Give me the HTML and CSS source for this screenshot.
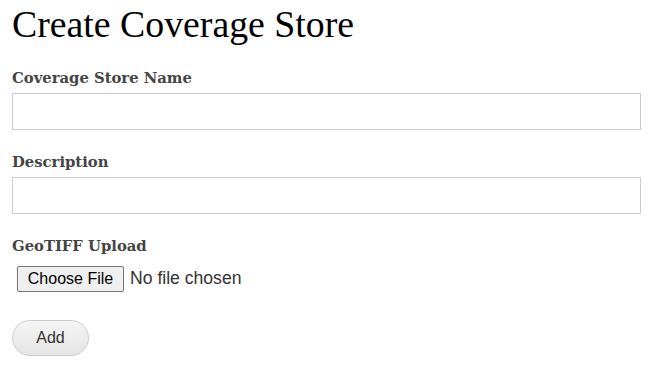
FILE: index.html
```html
<!DOCTYPE html>
<html>
<head>
<meta charset="utf-8">
<link rel="stylesheet" href="styles.css">
</head>
<body>
<div class="page">
  <h1 class="title">Create Coverage Store</h1>
  <form class="form">
    <div class="field">
      <label class="label" for="name">Coverage Store Name</label>
      <input class="text-input" id="name" type="text">
    </div>
    <div class="field">
      <label class="label" for="desc">Description</label>
      <input class="text-input" id="desc" type="text">
    </div>
    <div class="field">
      <label class="label" for="file">GeoTIFF Upload</label>
      <input class="file-input" id="file" type="file">
    </div>
    <div class="actions">
      <button class="add-btn" type="button">Add</button>
    </div>
  </form>
</div>
</body>
</html>
```
FILE: styles.css
```css
html, body {
  margin: 0;
  padding: 0;
  background: #fff;
}
.page {
  padding: 0 14px 0 12px;
  font-family: "DejaVu Serif", Georgia, serif;
}
.title {
  margin: 4px 0 0 0;
  font-family: "Liberation Serif", serif;
  font-weight: normal;
  font-size: 37.8px;
  line-height: 40px;
  color: #000;
}
.form {
  display: flex;
  flex-direction: column;
}
.field {
  display: flex;
  flex-direction: column;
}
.label {
  font-family: "DejaVu Serif", serif;
  font-weight: bold;
  font-size: 14.8px;
  color: #444;
  line-height: 20px;
  margin-top: 22px;
}
.field:first-child .label { margin-top: 24px; }
.text-input {
  box-sizing: border-box;
  height: 37px;
  margin: 5px 0 0 0;
  border: 1px solid #ccc;
  padding: 4px 8px;
  font-size: 16px;
}
.file-input {
  margin: 10px 0 0 5px;
  font-family: "Liberation Sans", Arial, sans-serif;
  font-size: 17.6px;
  color: #333;
}
.file-input::file-selector-button {
  font-family: "Liberation Sans", Arial, sans-serif;
  font-size: 16px;
  height: 26px;
  width: 107px;
  padding: 0;
  margin-right: 6px;
  border: 1px solid #767676;
  border-radius: 2px;
  background: #efefef;
  color: #000;
}
.actions {
  margin-top: 28px;
}
.add-btn {
  width: 77px;
  height: 36px;
  border: 1px solid #ccc;
  border-radius: 18px;
  background: linear-gradient(#f5f5f5, #e4e4e4);
  font-family: "Liberation Sans", Arial, sans-serif;
  font-size: 16px;
  color: #333;
  padding: 0;
}
```
